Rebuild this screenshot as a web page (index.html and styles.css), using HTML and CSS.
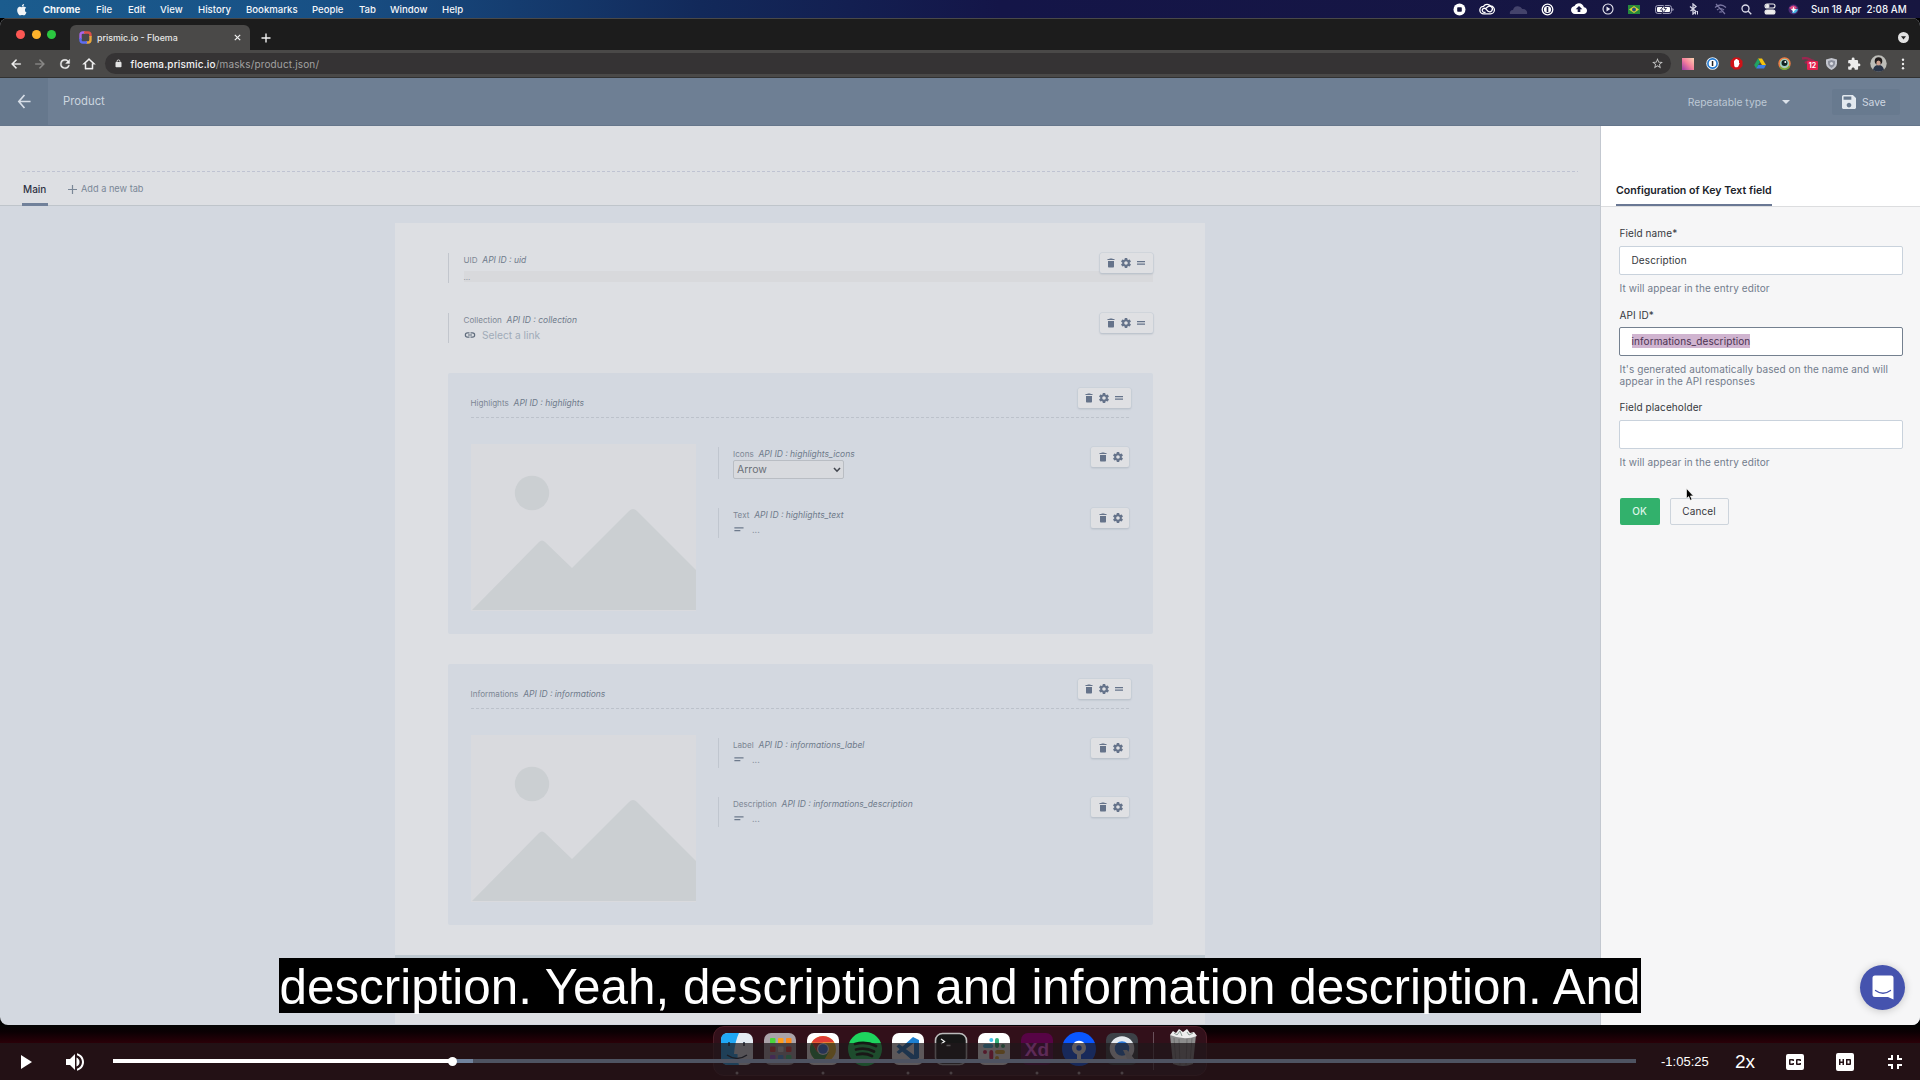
FILE: index.html
```html
<!DOCTYPE html>
<html lang="en">
<head>
<meta charset="utf-8">
<title>prismic.io - Floema</title>
<link rel="stylesheet" href="styles.css">
</head>
<body>
<svg class="defs" width="0" height="0">
  <defs>
    <symbol id="trash" viewBox="0 0 24 24"><path d="M6 19c0 1.100.9 2 2 2h8c1.100 0 2-.9 2-2V8H6v11zM19 4h-3.500l-1-1h-5l-1 1H5v2h14V4z"/></symbol>
    <symbol id="gear" viewBox="0 0 24 24"><path d="M19.430 12.980c.04-.32.07-.64.07-.98s-.03-.66-.07-.98l2.110-1.650c.19-.15.24-.42.12-.64l-2-3.460c-.12-.22-.39-.3-.61-.22l-2.490 1c-.52-.4-1.080-.73-1.690-.98l-.38-2.650C14.460 2.180 14.250 2 14 2h-4c-.25 0-.46.18-.49.42l-.38 2.650c-.61.25-1.170.59-1.690.98l-2.490-1c-.23-.09-.49 0-.61.22l-2 3.460c-.13.22-.07.49.12.64l2.110 1.650c-.04.32-.07.65-.07.98s.03.66.07.98l-2.110 1.650c-.19.15-.24.42-.12.64l2 3.460c.12.22.39.3.61.22l2.490-1c.52.4 1.080.73 1.690.98l.38 2.650c.03.24.24.42.49.42h4c.25 0 .46-.18.49-.42l.38-2.650c.61-.25 1.170-.59 1.690-.98l2.490 1c.23.09.49 0 .61-.22l2-3.460c.12-.22.07-.49-.12-.64l-2.110-1.650zM12 15.500c-1.930 0-3.500-1.570-3.500-3.500s1.570-3.500 3.500-3.500 3.500 1.570 3.500 3.500-1.570 3.500-3.500 3.500z"/></symbol>
    <symbol id="drag" viewBox="0 0 24 24"><path d="M20 8H4v2.400h16V8zM4 15.500h16v-2.400H4v2.400z"/></symbol>
    <symbol id="short-text" viewBox="0 0 24 24"><path d="M3 7h20v3H3V7zm0 6h13v3H3v-3z"/></symbol>
    <symbol id="mountains" viewBox="0 0 225 167" preserveAspectRatio="none"><circle cx="61" cy="49" r="17.200"/><path d="M1 166 68 98q3-3 6 0l27 26 57-57q4-4 8 0l59 59v40z"/></symbol>
  </defs>
</svg>

<header class="menubar">
  <svg class="apple" viewBox="0 0 24 24"><path d="M17.500 12.700c0-2.300 1.900-3.400 2-3.500-1.100-1.600-2.800-1.800-3.400-1.800-1.400-.1-2.800.9-3.500.9s-1.800-.8-3-.8c-1.500 0-3 .9-3.800 2.300-1.600 2.800-.4 7 1.200 9.300.8 1.100 1.700 2.400 2.900 2.300 1.200 0 1.600-.7 3-.7s1.800.7 3 .7 2-1.100 2.800-2.200c.9-1.300 1.200-2.500 1.300-2.600-.1 0-2.500-1-2.500-3.900zM15.200 5.900c.6-.8 1.100-1.900 1-2.900-.9 0-2.100.6-2.700 1.400-.6.700-1.100 1.800-1 2.800 1 .1 2.100-.5 2.700-1.300z"/></svg>
  <nav class="menus"><b>Chrome</b><span>File</span><span>Edit</span><span>View</span><span>History</span><span>Bookmarks</span><span>People</span><span>Tab</span><span>Window</span><span>Help</span></nav>
  <div class="status">
    <svg width="13" height="13" viewBox="0 0 13 13"><circle cx="6.500" cy="6.500" r="6" fill="#fff"/><rect x="4.200" y="4.200" width="4.600" height="4.600" rx=".8" fill="#14143c"/></svg>
    <svg width="16" height="12" viewBox="0 0 16 12" fill="none" stroke="#fff" stroke-width="1.300"><path d="M4.500 3.300a4.400 4.400 0 0 1 7-.3 3.900 3.900 0 0 1 0 7.800H4.700a3.500 3.500 0 0 1-.2-7.500z"/><path d="M9.300 8.500 6.700 5.900a2 2 0 1 0-.2 3M6.700 5.500 8.500 4a2.800 2.800 0 1 1 .6 4.300"/></svg>
    <svg width="19" height="11" viewBox="0 0 19 11"><path d="M1 10a3 3 0 0 1 3-4 5 5 0 0 1 9.300-1A4 4 0 0 1 18 10z" fill="#44436b"/></svg>
    <svg width="13" height="13" viewBox="0 0 13 13"><circle cx="6.500" cy="6.500" r="5.300" fill="none" stroke="#fff" stroke-width="1.300"/><circle cx="6.500" cy="6.500" r="3.600" fill="#fff"/><rect x="5.700" y="4" width="1.600" height="5" fill="#14143c"/></svg>
    <svg width="16" height="12" viewBox="0 4 24 17"><path fill="#fff" d="M19.350 10.040C18.670 6.590 15.640 4 12 4 9.110 4 6.600 5.640 5.350 8.040 2.340 8.360 0 10.910 0 14c0 3.310 2.690 6 6 6h13c2.760 0 5-2.240 5-5 0-2.640-2.050-4.780-4.650-4.960zM14 13v4h-4v-4H7l5-5 5 5h-3z"/></svg>
    <svg width="12" height="12" viewBox="0 0 12 12"><circle cx="6" cy="6" r="5" fill="none" stroke="#e8e8f2" stroke-width="1.100"/><path d="M4.500 3.500 8.300 6 4.500 8.500z" fill="#e8e8f2"/></svg>
    <svg width="12" height="9" viewBox="0 0 12 9"><path fill="#268a3c" d="M0 0h12v9H0z"/><path fill="#dfcf35" d="m6 1 5 3.500L6 8 1 4.500z"/><circle cx="6" cy="4.500" r="1.900" fill="#234a86"/></svg>
    <svg width="19" height="9" viewBox="0 0 19 9"><rect x=".6" y=".6" width="15.800" height="7.800" rx="2" fill="none" stroke="#aaa9c4"/><rect x="2" y="2" width="13" height="5" rx="1" fill="#fff"/><path d="M17.400 3v3q1.200-.5 1.200-1.500t-1.200-1.500" fill="#aaa9c4"/><path d="M9.500 0 5.500 5h2.300L7 9l4.500-5.500H9.200z" fill="#fff" stroke="#14143c" stroke-width=".8"/></svg>
    <svg width="11" height="12" viewBox="0 0 11 12" fill="none" stroke="#d4d4e4" stroke-width="1.300"><path d="M2 3.500 8 8.500l-3 2.500V1l3 2.500-5.500 4.500"/><path d="M7.500 8v3.500M9.500 8v3.500" stroke-width="1"/></svg>
    <svg width="13" height="12" viewBox="0 0 13 12" fill="none" stroke="#7875a0" stroke-width="1.200"><path d="M1 4.500q5.500-5 11 0M3 7q3.500-3 7 0M5.200 9.300q1.300-1 2.600 0M2 1l9 10"/></svg>
    <svg width="11" height="11" viewBox="0 0 11 11" fill="none" stroke="#dcdcea" stroke-width="1.300"><circle cx="4.500" cy="4.500" r="3.500"/><path d="m7 7 3.300 3.300"/></svg>
    <svg width="12" height="12" viewBox="0 0 12 12" fill="none" stroke="#eee" stroke-width="1.100"><rect x="1" y="1" width="10" height="4" rx="2"/><rect x="1" y="7" width="10" height="4" rx="2" fill="#eee"/><circle cx="3.500" cy="3" r="1.500" fill="#eee"/></svg>
    <svg width="11" height="11" viewBox="0 0 11 11"><circle cx="5.500" cy="5.500" r="5" fill="#4b2a72"/><path d="M1 4q5-5 8 0L5 6z" fill="#e04a86"/><path d="M4 9q5 1 6-4L5 5z" fill="#46b7e6"/><path d="m5.500 2.500 1 2.500 2 .5-2 1-1 2-1-2-2-1 2-.5z" fill="#fff"/></svg>
  </div>
  <div class="clock">Sun 18 Apr&nbsp; 2:08 AM</div>
</header>

<main class="window">
  <div class="tabstrip">
    <div class="lights"><i class="red"></i><i class="yellow"></i><i class="green"></i></div>
    <div class="tab">
      <svg width="13" height="13" viewBox="0 0 13 13" fill="none" stroke-width="2.400"><path d="M1.500 8V4q0-2.500 2.500-2.500h2" stroke="#a865e8"/><path d="M5 1.500h4q2.500 0 2.500 2.500v2" stroke="#d9504a"/><path d="M11.500 5v4q0 2.500-2.500 2.500H7" stroke="#e8a63c"/><path d="M8 11.500H4Q1.500 11.500 1.500 9V7" stroke="#5c6cf0"/></svg>
      <span class="tab-title">prismic.io - Floema</span>
      <svg width="7" height="7" viewBox="0 0 7 7" stroke="#f0f0f0" stroke-width="1.200"><path d="m.8.8 5.400 5.400M6.200.8.800 6.200"/></svg>
    </div>
    <svg class="newtab" width="10" height="10" viewBox="0 0 10 10" stroke="#f0f0f0" stroke-width="1.400"><path d="M5 .5v9M.5 5h9"/></svg>
    <svg class="tabmenu" width="11" height="11" viewBox="0 0 11 11"><circle cx="5.500" cy="5.500" r="5.500" fill="#e2e2e2"/><path d="M3 4.300h5L5.500 7.400z" fill="#222"/></svg>
  </div>

  <div class="toolbar">
    <div class="nav">
      <svg viewBox="0 0 24 24"><path d="M20 11H7.830l5.590-5.590L12 4l-8 8 8 8 1.410-1.410L7.830 13H20v-2z"/></svg>
      <svg class="off" viewBox="0 0 24 24"><path d="m12 4-1.410 1.410L16.170 11H4v2h12.170l-5.580 5.590L12 20l8-8z"/></svg>
      <svg viewBox="0 0 24 24"><path d="M17.650 6.350A7.960 7.960 0 0 0 12 4a8 8 0 1 0 7.730 10h-2.080A6 6 0 1 1 12 6c1.660 0 3.140.69 4.220 1.780L13 11h7V4l-2.350 2.350z"/></svg>
      <svg viewBox="0 0 24 24"><path d="M12 5.200 5.500 11H7v8h10v-8h1.500L12 5.200zM12 2.300 23 12.500h-4V21H5v-8.500H1z"/></svg>
    </div>
    <div class="address">
      <svg class="lock" viewBox="0 0 24 24"><path d="M18 8h-1V6A5 5 0 0 0 7 6v2H6a2 2 0 0 0-2 2v10a2 2 0 0 0 2 2h12a2 2 0 0 0 2-2V10a2 2 0 0 0-2-2zM9 8V6a3 3 0 0 1 6 0v2z"/></svg>
      <span class="url"><b>floema.prismic.io</b>/masks/product.json/</span>
      <svg class="star" viewBox="0 0 24 24"><path d="M22 9.240l-7.190-.62L12 2 9.190 8.630 2 9.240l5.460 4.730L5.820 21 12 17.270 18.180 21l-1.630-7.030L22 9.240zM12 15.400l-3.760 2.270 1-4.280-3.320-2.880 4.380-.38L12 6.100l1.710 4.040 4.380.38-3.320 2.880 1 4.280L12 15.400z"/></svg>
    </div>
    <div class="extensions">
      <svg width="12" height="12" viewBox="0 0 12 12"><defs><linearGradient id="pink" x1="0" y1="1" x2="1" y2="0"><stop stop-color="#9a3ba8"/><stop offset=".5" stop-color="#f57f9c"/><stop offset="1" stop-color="#fbd3b0"/></linearGradient></defs><path d="M0 0h12v12H0z" fill="url(#pink)"/></svg>
      <svg width="13" height="13" viewBox="0 0 13 13"><circle cx="6.500" cy="6.500" r="6.300" fill="#e8f0f8"/><circle cx="6.500" cy="6.500" r="4.600" fill="#fff" stroke="#1f78d0" stroke-width="1.600"/><path d="M5.800 4h1.500v5H5.800z" fill="#222"/></svg>
      <svg width="13" height="13" viewBox="0 0 13 13"><path d="M4 .5h5L12.500 4v5L9 12.500H4L.5 9V4z" fill="#d01217"/><path d="M4 6V3.500h1V2.600h1V2h1v.6h1v.7h1v3l.8-.3-1.500 3.500-1 .8h-2l-1-1z" fill="#fff"/></svg>
      <svg width="12" height="11" viewBox="0 0 12 11"><path d="M4 .5h4l4 6.500H8z" fill="#f4c20d"/><path d="m4 .5 2 3.400L2.200 10.500.2 7z" fill="#1fa463"/><path d="M4.200 7H12l-2 3.500H2.200z" fill="#3b7de8"/></svg>
      <svg width="13" height="13" viewBox="0 0 13 13"><circle cx="6.500" cy="6.500" r="5.500" fill="#9ed0c0" stroke="#ed7d42" stroke-width="1.500"/><path d="M2 10a5.500 5.500 0 0 0 9.500-1" stroke="#6db33c" fill="none" stroke-width="1.500"/><circle cx="6.500" cy="6" r="3" fill="#122"/><circle cx="7.300" cy="5" r="1" fill="#fff"/></svg>
      <span class="ext-badge"><svg width="14" height="10" viewBox="0 0 14 10"><path d="M1 1.500q5-1 8 1t4 .5M4 6q4-3 8-1" stroke="#9c2650" stroke-width="2.400" fill="none"/></svg><em>12</em></span>
      <svg width="11" height="12" viewBox="0 0 11 12"><path d="M5.500 0 11 1.600v4Q10.500 10 5.500 12 .5 10 0 5.600v-4z" fill="#c3c5cd"/><path d="M5.500 2 9 3v3Q8.500 8.500 5.500 10 2.500 8.500 2 6V3z" fill="#8d909c"/><circle cx="5.500" cy="5.500" r="1.600" fill="#dcdde3"/></svg>
      <svg width="14" height="14" viewBox="0 0 24 24"><path fill="#ececec" d="M20.500 11H19V7c0-1.100-.9-2-2-2h-4V3.500a2.500 2.500 0 0 0-5 0V5H4c-1.100 0-1.990.9-1.990 2v3.800H3.500c1.490 0 2.700 1.210 2.700 2.700s-1.210 2.700-2.700 2.700H2V20c0 1.100.9 2 2 2h3.800v-1.500c0-1.490 1.210-2.700 2.700-2.700s2.700 1.210 2.700 2.700V22H17c1.100 0 2-.9 2-2v-4h1.500a2.500 2.500 0 0 0 0-5z"/></svg>
      <svg width="17" height="17" viewBox="0 0 17 17"><circle cx="8.500" cy="8.500" r="8.200" fill="#bcbcb8"/><path d="M3 15q1-5 5.500-5t5.500 5Q8.500 18.500 3 15z" fill="#2a3447"/><circle cx="8.500" cy="6" r="3.800" fill="#211c1c"/><ellipse cx="8.500" cy="8" rx="2.200" ry="2.600" fill="#cda08e"/></svg>
      <svg width="4" height="12" viewBox="0 0 4 12" fill="#eee"><circle cx="2" cy="1.800" r="1.200"/><circle cx="2" cy="6" r="1.200"/><circle cx="2" cy="10.200" r="1.200"/></svg>
    </div>
  </div>

  <div class="appbar">
    <div class="back"><svg viewBox="0 0 14 16" fill="none" stroke="#d6dde6" stroke-width="1.800"><path d="M7.500 1 1.500 8l6 7M1.500 8H14"/></svg></div>
    <span class="doc-name">Product</span>
    <span class="doc-type">Repeatable type</span>
    <i class="caret"></i>
    <div class="save"><svg viewBox="3 3 18 18"><path d="M17 3H5a2 2 0 0 0-2 2v14c0 1.100.89 2 2 2h14c1.100 0 2-.9 2-2V7l-4-4zm-5 16c-1.660 0-3-1.340-3-3s1.340-3 3-3 3 1.340 3 3-1.340 3-3 3zm3-10H5V5h10v4z"/></svg><span>Save</span></div>
  </div>

  <div class="content">
    <section class="builder">
      <div class="zones">
        <div class="zones-top"></div>
        <div class="zone-tabs"><span class="zone current">Main</span><span class="zone-add"><svg width="9" height="9" viewBox="0 0 9 9" stroke="#7a8797" stroke-width="1.200"><path d="M4.500 0v9M0 4.500h9"/></svg>Add a new tab</span></div>
      </div>
      <div class="sheet">
        <div class="field uid">
          <div class="field-body"><p class="label">UID <em>API ID : uid</em></p><p class="uid-value">...</p></div>
          <div class="tools"><svg><use href="#trash"/></svg><svg><use href="#gear"/></svg><svg><use href="#drag"/></svg></div>
        </div>
        <div class="field collection">
          <div class="field-body"><p class="label">Collection <em>API ID : collection</em></p><p class="link-value"><svg viewBox="0 0 24 24"><path d="M3.900 12c0-1.710 1.390-3.100 3.100-3.100h4V6.500H7a5.500 5.500 0 0 0 0 11h4v-2.400H7c-1.710 0-3.100-1.390-3.100-3.100zM8 13.200h8v-2.400H8v2.400zm9-6.700h-4v2.400h4a3.100 3.100 0 0 1 0 6.200h-4v2.400h4a5.500 5.500 0 0 0 0-11z"/></svg>Select a link</p></div>
          <div class="tools"><svg><use href="#trash"/></svg><svg><use href="#gear"/></svg><svg><use href="#drag"/></svg></div>
        </div>

        <div class="group">
          <div class="group-head"><p class="label">Highlights <em>API ID : highlights</em></p><div class="tools"><svg><use href="#trash"/></svg><svg><use href="#gear"/></svg><svg><use href="#drag"/></svg></div></div>
          <div class="group-body">
            <svg class="picture"><use href="#mountains"/></svg>
            <div class="subfields">
              <div class="subfield tall"><div class="field-body"><p class="label">Icons <em>API ID : highlights_icons</em></p><div class="select">Arrow<svg width="8" height="6" viewBox="0 0 8 6" fill="none" stroke="#43474f" stroke-width="1.600"><path d="m1 1 3 3.200L7 1"/></svg></div></div><div class="tools two"><svg><use href="#trash"/></svg><svg><use href="#gear"/></svg></div></div>
              <div class="subfield"><div class="field-body"><p class="label">Text <em>API ID : highlights_text</em></p><p class="text-value"><svg><use href="#short-text"/></svg>...</p></div><div class="tools two"><svg><use href="#trash"/></svg><svg><use href="#gear"/></svg></div></div>
            </div>
          </div>
        </div>

        <div class="group">
          <div class="group-head"><p class="label">Informations <em>API ID : informations</em></p><div class="tools"><svg><use href="#trash"/></svg><svg><use href="#gear"/></svg><svg><use href="#drag"/></svg></div></div>
          <div class="group-body">
            <svg class="picture"><use href="#mountains"/></svg>
            <div class="subfields">
              <div class="subfield"><div class="field-body"><p class="label">Label <em>API ID : informations_label</em></p><p class="text-value"><svg><use href="#short-text"/></svg>...</p></div><div class="tools two"><svg><use href="#trash"/></svg><svg><use href="#gear"/></svg></div></div>
              <div class="subfield"><div class="field-body"><p class="label">Description <em>API ID : informations_description</em></p><p class="text-value"><svg><use href="#short-text"/></svg>...</p></div><div class="tools two"><svg><use href="#trash"/></svg><svg><use href="#gear"/></svg></div></div>
            </div>
          </div>
        </div>
        <div class="sheet-rule"></div>
      </div>
    </section>

    <aside class="config">
      <div class="config-head"><h2>Configuration of Key Text field</h2></div>
      <form class="config-form">
        <label>Field name*</label>
        <div class="input">Description</div>
        <p class="help">It will appear in the entry editor</p>
        <label>API ID*</label>
        <div class="input focus"><mark>informations_description</mark></div>
        <p class="help two-lines">It's generated automatically based on the name and will<br>appear in the API responses</p>
        <label>Field placeholder</label>
        <div class="input"></div>
        <p class="help">It will appear in the entry editor</p>
        <div class="buttons"><span class="ok">OK</span><span class="cancel">Cancel</span></div>
      </form>
      <svg class="pointer" viewBox="0 0 8 13"><path d="M.5.5v10l2.200-2 1.600 3.800 1.700-.8-1.600-3.600h3z" fill="#000" stroke="#fff" stroke-width=".6"/></svg>
      <div class="chat"><svg viewBox="0 0 22 25"><path d="M3 .5h16Q21.500.5 21.500 3v21.500L16 22H3Q.5 22 .5 19.500V3Q.5.5 3 .5z" fill="#fff"/><path d="M3.500 15.500q7.500 5.500 15 0" fill="none" stroke="#4553ae" stroke-width="1.300" stroke-linecap="round"/></svg></div>
    </aside>
  </div>
</main>

<div class="desktop">
  <div class="dock">
    <svg class="run" viewBox="0 0 34 34"><rect x="1" y="1" width="32" height="32" rx="7" fill="#e4ebf2"/><path d="M19 1H8Q1 1 1 8v18q0 7 7 7h11q-2-5-1.500-11H14Q15 9 19 1z" fill="#20a7f5"/><path d="M9 10v4M24 10v4M7 23q10 7 20 0" fill="none" stroke="#1a2a3c" stroke-width="1.500"/><circle class="dot" cx="17" cy="41" r="1.500"/></svg>
    <svg viewBox="0 0 34 34"><rect x="1" y="1" width="32" height="32" rx="7" fill="#aaa3a9"/><g><rect x="7" y="6" width="5.500" height="5.500" rx="1" fill="#4ad63c"/><rect x="15" y="6" width="5.500" height="5.500" rx="1" fill="#ff9d1e"/><rect x="23" y="6" width="5.500" height="5.500" rx="1" fill="#ff8a1a"/><rect x="7" y="14.500" width="5.500" height="5.500" rx="1" fill="#e14444"/><rect x="15" y="14.500" width="5.500" height="5.500" rx="1" fill="#d8d8d8"/><rect x="23" y="14.500" width="5.500" height="5.500" rx="1" fill="#e83d3d"/><rect x="7" y="23" width="5.500" height="5.500" rx="1" fill="#a25fe0"/><rect x="15" y="23" width="5.500" height="5.500" rx="1" fill="#4b9fe8"/><rect x="23" y="23" width="5.500" height="5.500" rx="1" fill="#40d48a"/></g></svg>
    <svg class="run" viewBox="0 0 34 34"><rect x="1" y="1" width="32" height="32" rx="7" fill="#fff"/><circle cx="17" cy="17" r="13" fill="#f3c431"/><path d="M5.740 10.500A13 13 0 0 1 28.260 10.500H17z" fill="#de3c36"/><path d="M5.740 10.500A13 13 0 0 0 17 30l5.600-9.700L17 17l-5.600 3.300z" fill="#2fa250"/><path d="M5.740 10.500 11.400 20.200 17 10.500z" fill="#de3c36"/><circle cx="17" cy="17" r="6" fill="#fff"/><circle cx="17" cy="17" r="4.800" fill="#3f7fe8"/><circle class="dot" cx="17" cy="41" r="1.500"/></svg>
    <svg viewBox="0 0 34 34"><circle cx="17" cy="17" r="17" fill="#1ed45e"/><path d="M7 12q11-3 21 2M8 17.500q10-2.500 18 2M9 22.500q8-2 15 1.500" fill="none" stroke="#0b1c11" stroke-width="2.800" stroke-linecap="round"/></svg>
    <svg class="run" viewBox="0 0 34 34"><rect x="1" y="1" width="32" height="32" rx="7" fill="#fff"/><path d="m22 5 6 3v18l-6 3L5.500 14.500 8 12l15 11V11L8 22l-2.500-2z" fill="#1d7fd0"/><circle class="dot" cx="17" cy="41" r="1.500"/></svg>
    <svg class="run" viewBox="0 0 34 34"><rect x="1.500" y="1.500" width="31" height="31" rx="7" fill="#161616" stroke="#bcbcbc" stroke-width="1.600"/><path d="m7 7 3.500 2.500L7 12M12.500 13.500h4" fill="none" stroke="#eee" stroke-width="1.300"/><circle class="dot" cx="17" cy="41" r="1.500"/></svg>
    <svg viewBox="0 0 34 34"><rect x="1" y="1" width="32" height="32" rx="7" fill="#fff"/><g stroke-width="4" stroke-linecap="round"><path d="M14.300 8v.1M14.300 14H8" stroke="#42c2ec"/><path d="M20 8v6M26 14v.1" stroke="#35b07b"/><path d="M14.300 26v-6M8 20v-.1" stroke="#dc2357"/><path d="M20 20h6M20 26v-.1" stroke="#e8b030"/></g></svg>
    <svg class="run" viewBox="0 0 34 34"><rect x="1" y="1" width="32" height="32" rx="7" fill="#570445"/><text x="17" y="24" text-anchor="middle" font-family="Liberation Sans" font-weight="bold" font-size="19" fill="#ff5cf2">Xd</text><circle class="dot" cx="17" cy="41" r="1.500"/></svg>
    <svg class="run" viewBox="0 0 34 34"><circle cx="17" cy="17" r="17" fill="#0a57ff"/><path d="M15 31v-8.500a7 7 0 1 1 4 0V31z" fill="#fff"/><circle cx="17" cy="16" r="2.700" fill="#0a57ff"/><circle class="dot" cx="17" cy="41" r="1.500"/></svg>
    <svg class="run" viewBox="0 0 34 34"><rect x="1" y="1" width="32" height="32" rx="7" fill="#3c4147"/><circle cx="17" cy="16.500" r="9.800" fill="#2a78d8" stroke="#e4e9ee" stroke-width="5"/><path d="m18 18 4 0 9 11h-8z" fill="#cfd6dc"/><circle class="dot" cx="17" cy="41" r="1.500"/></svg>
    <i class="dock-sep"></i>
    <svg class="bin" viewBox="0 0 28 38"><path d="M1 6h26l-3 29q-10 4-20 0z" fill="#8c8c8c"/><path d="M5 9l2 25M10 10l1 26M18 10l-1 26M23 9l-2 25" stroke="#707070" stroke-width="1"/><path d="M1 6 4 2l3 2 3-4 4 3 4-3 3 4 4-1 3 4q-13 5-27-1z" fill="#eee"/><path d="m5 4 3 2 3-4 2 5M18 3l2 3 4-2" stroke="#8b9c95" fill="none"/></svg>
  </div>
</div>

<div class="caption">description. Yeah, description and information description. And</div>

<footer class="player">
  <svg class="play" viewBox="0 0 11 14"><path d="M0 0 11 7 0 14z"/></svg>
  <svg class="volume" viewBox="3 3 18 18"><path d="M3 9v6h4l5 5V4L7 9H3zm10.500-1.500v9Q16.500 15 16.500 12t-3-4.500zM14 3.230v2.060c2.890.86 5 3.540 5 6.710s-2.110 5.850-5 6.710v2.060c4.010-.91 7-4.490 7-8.770s-2.990-7.860-7-8.770z"/></svg>
  <div class="track"><div class="buffered"></div><div class="played"></div><i class="knob"></i></div>
  <span class="time">-1:05:25</span>
  <span class="speed">2x</span>
  <svg class="cc" viewBox="3 4 18 16"><path d="M19 4H5a2 2 0 0 0-2 2v12a2 2 0 0 0 2 2h14a2 2 0 0 0 2-2V6a2 2 0 0 0-2-2zm-8 7H9.500v-.5h-2v3h2V13H11v1a1 1 0 0 1-1 1H7a1 1 0 0 1-1-1v-4a1 1 0 0 1 1-1h3a1 1 0 0 1 1 1v1zm7 0h-1.500v-.5h-2v3h2V13H18v1a1 1 0 0 1-1 1h-3a1 1 0 0 1-1-1v-4a1 1 0 0 1 1-1h3a1 1 0 0 1 1 1v1z"/></svg>
  <svg class="hd" viewBox="3 3 18 18"><path d="M19 3H5a2 2 0 0 0-2 2v14a2 2 0 0 0 2 2h14a2 2 0 0 0 2-2V5a2 2 0 0 0-2-2zm-8 12H9.500v-2h-2v2H6V9h1.500v2.500h2V9H11v6zm2-6h4a1 1 0 0 1 1 1v4a1 1 0 0 1-1 1h-4V9zm1.500 4.500h2v-3h-2v3z"/></svg>
  <svg class="exit" viewBox="5 5 14 14"><path d="M5 16h3v3h2v-5H5v2zm3-8H5v2h5V5H8v3zm6 11h2v-3h3v-2h-5v5zm2-11V5h-2v5h5V8h-3z"/></svg>
</footer>
</body>
</html>
```
FILE: styles.css
```css
* { box-sizing: border-box; }
body { margin: 0; width: 1920px; height: 1080px; overflow: hidden; position: relative; background: #000; font-family: Inter, "Liberation Sans", sans-serif; display: flex; flex-direction: column; }
p, h2 { margin: 0; }
svg { display: block; flex: none; }
.defs { position: absolute; }

/* macOS menu bar */
.menubar { height: 18px; flex: none; display: flex; align-items: center; background: linear-gradient(90deg, #1b5c8e 0, #185085 330px, #12295a 700px, #141548 1000px, #171640 1920px); color: #f4f6fa; font-size: 9.600px; font-weight: 500; line-height: 19px; }
.apple { width: 15px; height: 15px; margin: 0 14px; fill: #f2f5f8; }
.menus { width: 1404px; display: grid; grid-template-columns: 53px 32px 32px 38px 48px 66px 47px 31px 52px auto; }
.status { display: grid; grid-template-columns: 26px 30px 32px 26px 37px 21px 32px 28px 30px 25px 26px 22px 24px; align-items: center; justify-items: center; margin-left: -1px; }
.clock { margin-left: 6px; font-size: 9.800px; white-space: nowrap; }

/* browser chrome */
.window { height: 1006.500px; flex: none; border-radius: 8px; overflow: hidden; display: flex; flex-direction: column; position: relative; background: #d3d8e0; }
.tabstrip { height: 32px; flex: none; background: #1c1c1c; border-top: 1px solid #494949; display: flex; align-items: center; padding-left: 16px; }
.lights { display: flex; gap: 6.500px; width: 54px; padding-bottom: 0; }
.lights i { width: 9px; height: 9px; border-radius: 50%; }
.red { background: #fc5753; }
.yellow { background: #fdb32c; }
.green { background: #2bc740; }
.tab { width: 180px; height: 25px; align-self: flex-end; background: #4a4948; border-radius: 6px 6px 0 0; display: flex; align-items: center; padding: 0 9px 0 9px; color: #e9e9e9; font-size: 8.800px; font-weight: 500; }
.tab-title { margin-left: 5px; flex: 1; white-space: nowrap; }
.newtab { margin-left: 11px; margin-top: 6px; }
.tabmenu { margin: 6px 11px 0 auto; }
.toolbar { height: 28px; flex: none; background: #4a4948; border-bottom: 1px solid #323232; display: flex; align-items: center; }
.nav { width: 105px; padding-left: 9px; display: flex; gap: 10.300px; }
.nav svg { width: 14px; height: 14px; fill: #f2f2f2; stroke: #f2f2f2; stroke-width: .6; }
.nav .off { fill: #8b8a89; stroke: #8b8a89; }
.address { width: 1566px; height: 21px; border-radius: 11px; background: #353334; display: flex; align-items: center; padding: 0 7.500px 0 9px; }
.lock { width: 9px; height: 9px; fill: #e4e4e4; }
.url { flex: 1; margin-left: 7.500px; color: #a3a2a2; font-size: 10px; letter-spacing: .15px; }
.url b { font-weight: 500; color: #f4f4f4; }
.star { width: 13px; height: 13px; fill: #c4c4c4; }
.extensions { padding-left: 5px; display: grid; grid-template-columns: 24px 24px 24px 24px 24px 24px 22px 24px 24px 25px; align-items: center; justify-items: center; }
.ext-badge { position: relative; padding-bottom: 3px; }
.ext-badge em { position: absolute; left: 6px; top: 4px; width: 11px; height: 9px; border-radius: 1px; background: #e5214f; color: #fff; font: bold 7px/9px Inter, sans-serif; text-align: center; }

/* application header */
.appbar { height: 48px; flex: none; display: flex; align-items: center; background: #6e7f94; border-bottom: 1px solid #65768b; color: #d0d8e2; padding-right: 20px; }
.back { width: 48px; height: 47px; background: #66788d; display: grid; place-items: center; }
.back svg { width: 14px; height: 15px; }
.doc-name { margin: -1px 0 0 15px; font-size: 11.300px; flex: 1; color: #ccd5df; }
.doc-type { font-size: 10.300px; color: #bdc8d5; letter-spacing: 0; }
.caret { margin: 1px 42px 0 15px; border: 4px solid transparent; border-top-color: #dbe2ea; border-bottom: 0; }
.save { width: 68px; height: 26px; background: #687a8f; border-radius: 2px; display: flex; align-items: center; gap: 6px; padding-left: 10px; font-size: 10.300px; }
.save svg { width: 14px; height: 14px; fill: #e3e9ef; }

/* custom type builder */
.content { flex: 1; display: flex; min-height: 0; }
.builder { width: 1601px; display: flex; flex-direction: column; align-items: flex-start; border-right: 1px solid #c3c8d0; }
.zones { width: 1600px; height: 80px; flex: none; background: #dddfe3; border-bottom: 1px solid #bfc5cb; padding-left: 22px; }
.zones-top { width: 1556px; height: 46px; background: linear-gradient(90deg, #bfc3d2 60%, transparent 0) 0 100% / 5px 1px repeat-x; }
.zone-tabs { display: flex; height: 34px; gap: 20px; line-height: 34px; color: #7a8797; font-size: 9.200px; }
.zone.current { color: #2d3142; font-size: 10px; font-weight: 500; border-bottom: 3px solid #71819a; width: 26px; padding-left: 1px; white-space: nowrap; }
.zone-add { display: flex; align-items: center; gap: 4px; height: 34px; white-space: nowrap; }
.sheet { width: 810px; margin: 17px 0 0 395px; height: 801px; background: #dddfe3; padding: 30px 52px 0 53px; color: #7f8996; }
.label { font-size: 8.100px; line-height: 10px; white-space: nowrap; color: #7d8794; }
.label em { margin-left: 2.500px; font-size: 8.500px; color: #6f7b8b; }
.field { display: flex; height: 30px; margin-bottom: 30px; border-left: 1px solid #c2c6cd; position: relative; }
.field-body { flex: 1; padding: 2px 0 0 14.500px; }
.uid-value { height: 11px; margin-top: 6px; background: #d8d9dc; font-size: 8px; line-height: 12px; color: #8a929c; }
.link-value { display: flex; align-items: center; gap: 6.500px; font-size: 10.200px; line-height: 14px; margin-top: 2.500px; color: #a0abb8; }
.link-value svg { width: 12px; height: 12px; fill: #5f6c7c; }
.tools { width: 53.500px; height: 20px; flex: none; border-radius: 2px; background: #dfe0e3; box-shadow: 0 0 0 .5px #c5cdd6, 0 1px 2px #a9b1bc; display: flex; align-items: center; justify-content: center; gap: 3px; }
.field > .tools { position: absolute; right: 0; top: 0; }
.tools svg { width: 12px; height: 12px; fill: #65738a; }
.tools.two { width: 38px; }
.group { height: 261px; margin-bottom: 30px; background: #d3d8e0; border-radius: 2px; padding: 14.500px 22px 0 22.500px; }
.group-head { height: 30px; display: flex; justify-content: space-between; background: linear-gradient(90deg, #bcc2cb 60%, transparent 0) 0 100% / 5px 1px repeat-x; }
.group-head .label { padding-top: 10px; }
.group-body { display: flex; padding-top: 26px; }
.picture { width: 225px; height: 167px; background: #d9dade; fill: #cbcfd2; }
.subfields { flex: 1; margin: 3px 2px 0 22px; }
.subfield { display: flex; height: 30px; margin-bottom: 29px; border-left: 1px solid #c0c6cf; }
.subfield.tall { height: 32px; }
.text-value { display: flex; align-items: center; gap: 8px; height: 12px; margin-top: 4px; font-size: 9px; line-height: 12px; color: #8f99a6; }
.text-value svg { width: 11px; height: 11px; fill: #6d7a8c; }
.select { width: 111px; height: 19px; margin-top: 1.500px; border: 1px solid #b9bdc3; border-radius: 2px; background: #d8dade; display: flex; align-items: center; justify-content: space-between; padding: 0 2px 0 3px; font-size: 10.500px; color: #6a7078; }
.sheet-rule { height: 3px; margin: 0 -52px 0 -53px; background: #bec8d0; }

/* field configuration panel */
.config { width: 319px; position: relative; background: #f6f6f7; }
.config-head { height: 81px; background: #fff; border-bottom: 1px solid #dcdddf; padding: 58px 0 0 15px; }
.config-head h2 { width: fit-content; font-size: 10.580px; font-weight: 600; line-height: 14px; height: 22px; color: #20232a; border-bottom: 2px solid #6a7894; white-space: nowrap; }
.config-form { padding: 19px 17.500px 0 17.500px; font-size: 10px; letter-spacing: .1px; color: #35383d; }
.config-form label { display: block; line-height: 14px; height: 20px; padding-left: 1px; }
.input { height: 29px; border: 1px solid #c9d2dc; border-radius: 2px; background: #fff; padding-left: 12px; line-height: 27px; }
.input.focus { border: 1.500px solid #74808f; }
mark { background: #d0b4d0; color: #4c3352; padding: 1px 0; }
.help { padding: 7px 0 0 1px; height: 33px; line-height: 12px; color: #727c8c; white-space: nowrap; }
.help.two-lines { height: 44px; padding-top: 7px; }
.config-form label:nth-of-type(2) { height: 19px; }
.buttons { display: flex; gap: 10px; padding: 16px 0 0 1px; line-height: 27px; text-align: center; }
.ok { width: 40px; height: 27px; background: #32b16c; border-radius: 2px; color: #def5e8; font-weight: 500; }
.cancel { width: 59px; height: 27px; border: 1px solid #cdd4dc; border-radius: 2px; line-height: 25px; }
.pointer { position: absolute; left: 85px; top: 362px; width: 8px; height: 13px; }
.chat { position: absolute; right: 15px; bottom: 15px; width: 45px; height: 45px; border-radius: 50%; background: #4553ae; display: grid; place-items: center; box-shadow: 0 1px 8px #0003; }
.chat svg { width: 22px; height: 25px; }

/* desktop with dock */
.desktop { flex: 1; background: linear-gradient(#030303 0, #0b0003 7px, #300009 20px); display: flex; justify-content: center; padding-top: 1.500px; }
.dock { width: 494px; height: 50px; border: 1px solid #4b1d27; border-radius: 11px; background: #32101a; display: flex; align-items: flex-start; padding: 5px 0 0 6px; gap: 8.800px; }
.dock svg { width: 34px; height: 34px; }
.dock .run { overflow: visible; }
.dot { fill: #b5a4a8; }
.dock-sep { width: 1px; height: 38px; margin: 0 6px 0 5px; background: #69505a; }
.dock .bin { width: 28px; height: 38px; margin-top: -3px; }

/* video captions and controls */
.caption { position: absolute; left: 279px; top: 958px; width: 1362px; height: 55px; background: #000; color: #fff; font: 49.370px/57px "Liberation Sans", Arial, sans-serif; text-align: center; white-space: nowrap; }
.player { position: absolute; left: 0; right: 0; top: 1043px; height: 37px; background: rgba(31, 24, 26, .72); display: flex; align-items: center; padding: 0 18px 0 21px; color: #fff; font-family: "Liberation Sans", Arial, sans-serif; }
.player svg { fill: #fff; }
.play { width: 11px; height: 14px; }
.volume { width: 18px; height: 18px; margin-left: 34px; }
.track { position: relative; width: 1523px; height: 4px; margin: -1px 0 0 29px; background: #4e5361; }
.buffered { position: absolute; left: 0; top: 0; width: 360px; height: 4px; background: #71839d; }
.played { position: absolute; left: 0; top: 0; width: 340px; height: 4px; background: #fff; }
.knob { position: absolute; left: 335px; top: -2.500px; width: 9px; height: 9px; border-radius: 50%; background: #fff; }
.time { width: 74px; margin: -1px 0 0 25px; font-size: 13px; }
.speed { width: 51px; font-size: 19px; }
.cc { width: 18px; height: 16px; }
.hd { width: 18px; height: 18px; margin-left: 32px; }
.exit { width: 14px; height: 14px; margin-left: auto; }
```
